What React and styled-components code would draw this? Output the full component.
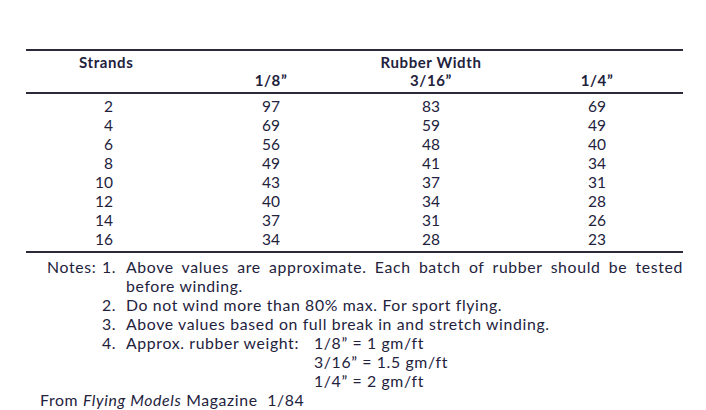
import React from "react";
import styled, { createGlobalStyle } from "styled-components";

const GlobalStyle = createGlobalStyle`
  html, body {
    margin: 0;
    padding: 0;
    background: #ffffff;
  }
  body {
    font-family: "Lato", "Open Sans", sans-serif;
    color: #23223d;
  }
`;

const Page = styled.div`
  width: 706px;
  height: 410px;
  box-sizing: border-box;
  padding: 49px 23px 0 26px;
  overflow: hidden;
`;

const Table = styled.div`
  border-top: 2px solid #2a2a3a;
  border-bottom: 2px solid #2a2a3a;
`;

const Head = styled.div`
  border-bottom: 2px solid #2a2a3a;
  padding: 2px 0 3px;
`;

const Row = styled.div`
  display: grid;
  grid-template-columns: 165px 160px 160px 1fr;
  font-size: ${(p) => (p.$tall ? "15.5px" : "15px")};
  letter-spacing: ${(p) => (p.$tall ? "0" : "0.6px")};
  line-height: ${(p) => (p.$tall ? "19px" : "18px")};
`;

const HeadCell = styled.div`
  font-weight: 700;
  text-align: ${(p) => p.$align || "center"};
  padding-left: ${(p) => p.$indent || 0}px;
  grid-column: ${(p) => p.$col || "auto"};
`;

const Body = styled.div`
  padding: 3px 0 2px;
`;

const Cell = styled.div`
  text-align: ${(p) => (p.$first ? "right" : "center")};
  padding-right: ${(p) => (p.$first ? 78 : 0)}px;
`;

const Notes = styled.div`
  display: flex;
  margin: 4px 0 0 21px;
  font-size: 15.8px;
  letter-spacing: 0.65px;
  line-height: 19px;
`;

const NotesLabel = styled.div`
  width: 55px;
  flex: none;
`;

const NoteList = styled.ol`
  list-style: none;
  margin: 0;
  padding: 0;
  flex: 1;
`;

const Note = styled.li`
  display: flex;
`;

const NoteNum = styled.span`
  width: 24px;
  flex: none;
`;

const NoteText = styled.span`
  flex: 1;
  text-align: ${(p) => (p.$justify ? "justify" : "left")};
`;

const WeightGrid = styled.div`
  display: grid;
  grid-template-columns: 188px auto;
`;

const Source = styled.div`
  margin-left: 14px;
  font-size: 15.8px;
  letter-spacing: 0.65px;
  line-height: 19px;
`;

const rows = [
  [2, 97, 83, 69],
  [4, 69, 59, 49],
  [6, 56, 48, 40],
  [8, 49, 41, 34],
  [10, 43, 37, 31],
  [12, 40, 34, 28],
  [14, 37, 31, 26],
  [16, 34, 28, 23],
];

const weights = ["1/8\u201D = 1 gm/ft", "3/16\u201D = 1.5 gm/ft", "1/4\u201D = 2 gm/ft"];

export default function App() {
  return (
    <Page>
      <GlobalStyle />
      <Table>
        <Head>
          <Row>
            <HeadCell $align="left" $indent={53}>
              Strands
            </HeadCell>
            <HeadCell $col="3">Rubber Width</HeadCell>
          </Row>
          <Row>
            <HeadCell $col="2">1/8”</HeadCell>
            <HeadCell>3/16”</HeadCell>
            <HeadCell>1/4”</HeadCell>
          </Row>
        </Head>
        <Body>
          {rows.map((r) => (
            <Row key={r[0]} $tall>
              {r.map((v, i) => (
                <Cell key={i} $first={i === 0}>
                  {v}
                </Cell>
              ))}
            </Row>
          ))}
        </Body>
      </Table>

      <Notes>
        <NotesLabel>Notes:</NotesLabel>
        <NoteList>
          <Note>
            <NoteNum>1.</NoteNum>
            <NoteText $justify>
              Above values are approximate. Each batch of rubber should be tested before winding.
            </NoteText>
          </Note>
          <Note>
            <NoteNum>2.</NoteNum>
            <NoteText>Do not wind more than 80% max. For sport flying.</NoteText>
          </Note>
          <Note>
            <NoteNum>3.</NoteNum>
            <NoteText>Above values based on full break in and stretch winding.</NoteText>
          </Note>
          <Note>
            <NoteNum>4.</NoteNum>
            <NoteText>
              <WeightGrid>
                <span>Approx. rubber weight:</span>
                <div>
                  {weights.map((w) => (
                    <div key={w}>{w}</div>
                  ))}
                </div>
              </WeightGrid>
            </NoteText>
          </Note>
        </NoteList>
      </Notes>
      <Source>
        From <i>Flying Models</i> Magazine&nbsp; 1/84
      </Source>
    </Page>
  );
}
